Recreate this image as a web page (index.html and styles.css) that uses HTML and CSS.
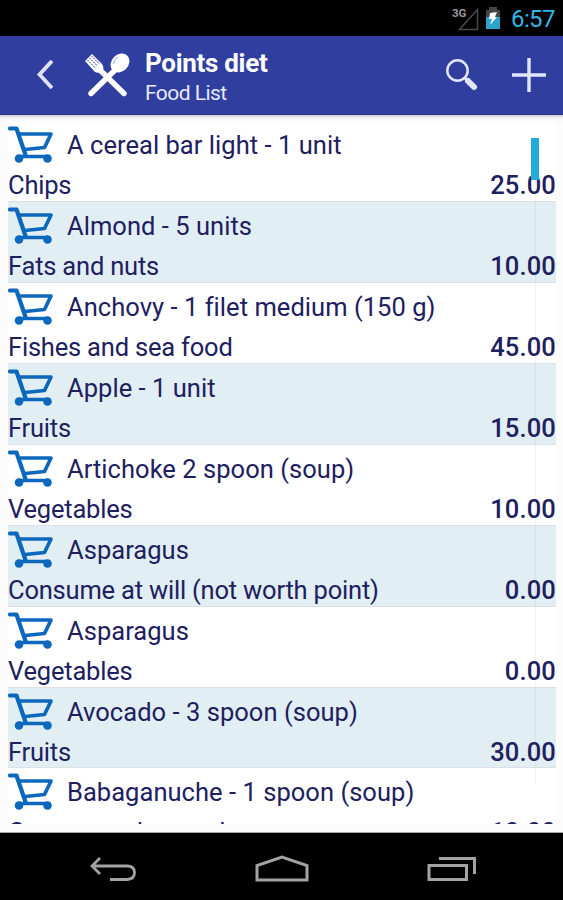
FILE: index.html
```html
<!DOCTYPE html>
<html lang="en">
<head>
  <meta charset="UTF-8" />
  <meta name="viewport" content="width=device-width, initial-scale=1.0" />
  <title>Points diet</title>
  <link rel="stylesheet" href="styles.css">
</head>
<body>
  <svg class="symbols" width="0" height="0">
    <symbol id="cart" viewBox="0 0 46 38">
      <g fill="none" stroke="#0c68bd" stroke-linejoin="round" stroke-linecap="round">
        <path d="M2 2.500H8.500L17.500 29" stroke-width="4.2" />
        <path d="M11 8H43L36.500 21.500L17 23.500M11 30.500H39" stroke-width="3.7" />
      </g>
      <circle cx="11" cy="32.500" r="4.3" fill="#0c68bd" />
      <circle cx="39.500" cy="32.500" r="4.3" fill="#0c68bd" />
    </symbol>
  </svg>

  <div class="status-bar">
    <svg class="signal" width="28" height="26" viewBox="0 0 28 26">
      <text class="network" x="0" y="11">3G</text>
      <path d="M7.5 23.5H25.5V3.5Z" fill="none" stroke="#484848" stroke-width="1.6" />
    </svg>
    <svg class="battery" width="16" height="24" viewBox="0 0 16 24">
      <path d="M4 1H12V4H15V13H1V4H4Z" fill="#444" />
      <path d="M1 11H15V23H1Z" fill="#2ba3cb" />
      <path d="M5 7L12 6L10 11H12L5 19L7 13H4Z" fill="#fff" />
    </svg>
    <div class="clock">6:57</div>
  </div>

  <div class="action-bar">
    <svg class="back" width="18" height="30" viewBox="0 0 18 30">
      <path d="M16 1L3.500 14.500L16 28" fill="none" stroke="#dfe3fa" stroke-width="3.8" />
    </svg>
    <svg class="logo" width="46" height="44" viewBox="0 0 46 44">
      <path d="M6 40.500L30 17M39 40.500L15 17" stroke="#fff" stroke-width="5.4" stroke-linecap="round" />
      <ellipse cx="35" cy="10" rx="8.4" ry="10.4" transform="rotate(45 35 10)" fill="#fff" />
      <path d="M28.500 11Q29 6 33 4" fill="none" stroke="#9ba4dc" stroke-width="1" />
      <path d="M0 8L7 1L17 11Q20 16 17 18Q14 21 10 19Z" fill="#fff" />
      <path d="M2.5 7L10.5 15M4.5 5L12.5 13M6.5 3L14.5 11" stroke="#303f9f" stroke-width="1" stroke-dasharray="2 .8" />
    </svg>
    <div class="titles">
      <div class="title">Points diet</div>
      <div class="subtitle">Food List</div>
    </div>
    <svg class="search" width="34" height="34" viewBox="0 0 34 34">
      <circle cx="12.500" cy="12.500" r="10.2" fill="none" stroke="#e3e6fb" stroke-width="2.5" />
      <path d="M19.500 19.500L23 23" stroke="#e3e6fb" stroke-width="3" />
      <path d="M23 23L29 29" stroke="#e3e6fb" stroke-width="6" stroke-linecap="round" />
    </svg>
    <svg class="add" width="34" height="34" viewBox="0 0 34 34">
      <path d="M0 17H34M17 0V34" stroke="#e3e6fb" stroke-width="3.4" />
    </svg>
  </div>

  <div class="content">
    <div class="list" id="list"></div>
    <div class="scroll-track"></div>
    <div class="scroll-thumb"></div>
  </div>

  <div class="nav-bar">
    <svg width="48" height="26" viewBox="0 0 48 26">
      <path d="M11 2L3 10L11 18M3 10H38Q45.500 10 45.500 16.500T38 23.500H21" fill="none" stroke="#a3a3a3" stroke-width="2.8" />
    </svg>
    <svg width="54" height="28" viewBox="0 0 54 28">
      <path d="M2 25V10.500L27 2L52 10.500V25Z" fill="none" stroke="#a3a3a3" stroke-width="3" />
    </svg>
    <svg width="50" height="26" viewBox="0 0 50 26">
      <path d="M2 9.500H39.500V23.500H2ZM12 2.500H47.500V18" fill="none" stroke="#a3a3a3" stroke-width="3" />
    </svg>
  </div>

  <script>
    const foods = [
      { name: 'A cereal bar light - 1 unit', group: 'Chips', points: 25 },
      { name: 'Almond - 5 units', group: 'Fats and nuts', points: 10 },
      { name: 'Anchovy - 1 filet medium (150 g)', group: 'Fishes and sea food', points: 45 },
      { name: 'Apple - 1 unit', group: 'Fruits', points: 15 },
      { name: 'Artichoke 2 spoon (soup)', group: 'Vegetables', points: 10 },
      { name: 'Asparagus', group: 'Consume at will (not worth point)', points: 0 },
      { name: 'Asparagus', group: 'Vegetables', points: 0 },
      { name: 'Avocado - 3 spoon (soup)', group: 'Fruits', points: 30 },
      { name: 'Babaganuche - 1 spoon (soup)', group: 'Creams and spread', points: 10 }
    ];

    const list = document.getElementById('list');

    foods.forEach((food) => {
      const row = document.createElement('div');
      row.className = 'row';
      row.innerHTML = `
        <div class="food">
          <svg class="cart"><use href="#cart" /></svg>
          <span class="name">${food.name}</span>
        </div>
        <div class="details">
          <span class="group">${food.group}</span>
          <span class="points">${food.points.toFixed(2)}</span>
        </div>`;
      list.appendChild(row);
    });
  </script>
</body>
</html>
```
FILE: styles.css
```css
body {
  margin: 0;
  width: 563px;
  height: 900px;
  overflow: hidden;
  display: flex;
  flex-direction: column;
  background-color: #000;
  font-family: Roboto, "Liberation Sans", sans-serif;
}
.symbols {
  position: absolute;
}
.status-bar {
  height: 36px;
  flex: none;
  box-sizing: border-box;
  padding: 6px 9px 0 0;
  display: flex;
  justify-content: flex-end;
  align-items: flex-start;
  background-color: #000;
}
.network {
  font-size: 11.5px;
  font-weight: bold;
  fill: #999;
}
.signal {
  margin-right: 5px;
}
.battery {
  margin-right: 10px;
}
.clock {
  width: 43px;
  font-size: 24px;
  line-height: 26px;
  letter-spacing: -0.6px;
  color: #33b5e5;
  white-space: nowrap;
}
.action-bar {
  height: 79px;
  flex: none;
  box-sizing: border-box;
  padding: 0 17px 0 36px;
  display: flex;
  align-items: center;
  background-color: #303f9f;
  border-bottom: 1px solid #27347f;
}
.back {
  margin-right: 31px;
}
.logo {
  margin-right: 14px;
}
.titles {
  flex: 1;
  padding-top: 4px;
  color: #fff;
}
.title {
  font-size: 26px;
  line-height: 32px;
  font-weight: bold;
  letter-spacing: -0.3px;
}
.subtitle {
  font-size: 21px;
  line-height: 28px;
  letter-spacing: -0.55px;
  color: #e6e8fb;
}
.search {
  margin-right: 33px;
}
.content {
  position: relative;
  height: 718px;
  flex: none;
  box-sizing: border-box;
  padding: 6px 7px 8px 8px;
  background: linear-gradient(#cfcfd4, #f8f8f8 4px, #fcfcfc 8px);
  border-bottom: 1px solid #aaa;
}
.list {
  height: 703px;
  overflow: hidden;
  padding-top: 0.3px;
}
.row {
  height: 80.9px;
  box-sizing: border-box;
  border-bottom: 1px solid #dcdfe3;
  background-color: #fff;
  color: #20205f;
  font-size: 25.5px;
}
.row:nth-child(even) {
  background-color: #e1eef3;
}
.food {
  height: 48px;
  display: flex;
  align-items: center;
  gap: 13px;
}
.cart {
  width: 46px;
  height: 38px;
}
.details {
  display: flex;
  justify-content: space-between;
  line-height: 32px;
}
.name {
  letter-spacing: 0.04px;
}
.group {
  letter-spacing: -0.2px;
}
.points {
  font-weight: 500;
  letter-spacing: 0.15px;
}
.scroll-track {
  position: absolute;
  top: 65px;
  left: 535px;
  width: 1px;
  height: 604px;
  background-color: rgba(100, 100, 130, 0.08);
}
.scroll-thumb {
  position: absolute;
  top: 23px;
  left: 531px;
  width: 8px;
  height: 42px;
  background-color: #22acd6;
}
.nav-bar {
  flex: 1;
  padding: 4px 86px 0 89px;
  display: flex;
  justify-content: space-between;
  align-items: center;
  background-color: #000;
}
```
